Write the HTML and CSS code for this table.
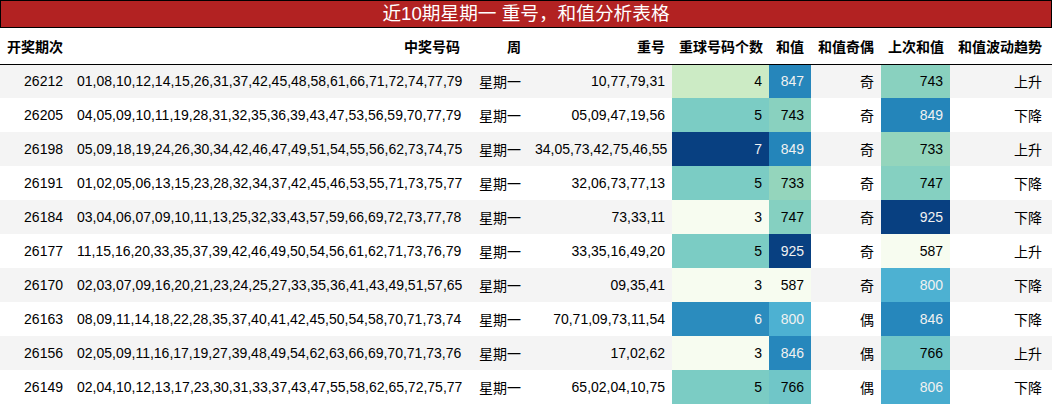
FILE: index.html
```html
<!DOCTYPE html>
<html lang="zh">
<head>
<meta charset="utf-8">
<title>近10期星期一 重号，和值分析表格</title>
<link rel="stylesheet" href="styles.css">
</head>
<body>
<div class="title">近10期星期一 重号，和值分析表格</div>
<table class="grid">
  <colgroup>
    <col class="c1"><col class="c2"><col class="c3"><col class="c4"><col class="c5"><col class="c6"><col class="c7"><col class="c8"><col class="c9">
  </colgroup>
  <thead>
    <tr><th>开奖期次</th><th>中奖号码</th><th>周</th><th>重号</th><th>重球号码个数</th><th>和值</th><th>和值奇偶</th><th>上次和值</th><th>和值波动趋势</th></tr>
  </thead>
  <tbody>
    <tr><td>26212</td><td>01,08,10,12,14,15,26,31,37,42,45,48,58,61,66,71,72,74,77,79</td><td>星期一</td><td>10,77,79,31</td><td class="g4">4</td><td class="s847 lt">847</td><td>奇</td><td class="s743">743</td><td>上升</td></tr>
    <tr><td>26205</td><td>04,05,09,10,11,19,28,31,32,35,36,39,43,47,53,56,59,70,77,79</td><td>星期一</td><td>05,09,47,19,56</td><td class="g5">5</td><td class="s743">743</td><td>奇</td><td class="s849 lt">849</td><td>下降</td></tr>
    <tr><td>26198</td><td>05,09,18,19,24,26,30,34,42,46,47,49,51,54,55,56,62,73,74,75</td><td>星期一</td><td>34,05,73,42,75,46,55</td><td class="g7 lt">7</td><td class="s849 lt">849</td><td>奇</td><td class="s733">733</td><td>上升</td></tr>
    <tr><td>26191</td><td>01,02,05,06,13,15,23,28,32,34,37,42,45,46,53,55,71,73,75,77</td><td>星期一</td><td>32,06,73,77,13</td><td class="g5">5</td><td class="s733">733</td><td>奇</td><td class="s747">747</td><td>下降</td></tr>
    <tr><td>26184</td><td>03,04,06,07,09,10,11,13,25,32,33,43,57,59,66,69,72,73,77,78</td><td>星期一</td><td>73,33,11</td><td class="g3">3</td><td class="s747">747</td><td>奇</td><td class="s925 lt">925</td><td>下降</td></tr>
    <tr><td>26177</td><td>11,15,16,20,33,35,37,39,42,46,49,50,54,56,61,62,71,73,76,79</td><td>星期一</td><td>33,35,16,49,20</td><td class="g5">5</td><td class="s925 lt">925</td><td>奇</td><td class="s587">587</td><td>上升</td></tr>
    <tr><td>26170</td><td>02,03,07,09,16,20,21,23,24,25,27,33,35,36,41,43,49,51,57,65</td><td>星期一</td><td>09,35,41</td><td class="g3">3</td><td class="s587">587</td><td>奇</td><td class="s800 lt">800</td><td>下降</td></tr>
    <tr><td>26163</td><td>08,09,11,14,18,22,28,35,37,40,41,42,45,50,54,58,70,71,73,74</td><td>星期一</td><td>70,71,09,73,11,54</td><td class="g6 lt">6</td><td class="s800 lt">800</td><td>偶</td><td class="s846 lt">846</td><td>下降</td></tr>
    <tr><td>26156</td><td>02,05,09,11,16,17,19,27,39,48,49,54,62,63,66,69,70,71,73,76</td><td>星期一</td><td>17,02,62</td><td class="g3">3</td><td class="s846 lt">846</td><td>偶</td><td class="s766">766</td><td>上升</td></tr>
    <tr><td>26149</td><td>02,04,10,12,13,17,23,30,31,33,37,43,47,55,58,62,65,72,75,77</td><td>星期一</td><td>65,02,04,10,75</td><td class="g5">5</td><td class="s766">766</td><td>偶</td><td class="s806 lt">806</td><td>下降</td></tr>
  </tbody>
</table>
</body>
</html>
```

FILE: styles.css
```css
html, body {
  margin: 0;
  padding: 0;
  background: #ffffff;
}

body {
  font-family: "Liberation Sans", "Noto Sans CJK SC", sans-serif;
  font-size: 14px;
  color: #000000;
}

.title {
  box-sizing: border-box;
  height: 28px;
  border: 1px solid #000000;
  background: #b22222;
  color: #ffffff;
  font-size: 18.67px;
  line-height: 26px;
  text-align: center;
}

.grid {
  width: 1052px;
  table-layout: fixed;
  border-collapse: collapse;
  border-spacing: 0;
}

.c1 { width: 70px; }
.c2 { width: 397px; }
.c3 { width: 61px; }
.c4 { width: 144px; }
.c5 { width: 97px; }
.c6 { width: 42px; }
.c7 { width: 70px; }
.c8 { width: 69px; }
.c9 { width: 102px; }

.grid th {
  height: 36px;
  padding: 0 7px;
  font-weight: bold;
  text-align: right;
  white-space: nowrap;
  border-bottom: 1px solid #000000;
  box-sizing: border-box;
}

.grid td {
  height: 34px;
  padding: 0 7px;
  text-align: right;
  white-space: nowrap;
  box-sizing: border-box;
}

.grid th:last-child,
.grid td:last-child {
  padding-right: 10px;
}

.grid tbody tr:nth-child(odd) { background: #f4f4f4; }
.grid tbody tr:nth-child(even) { background: #ffffff; }

.lt { color: #f1f1f1; }

.g3 { background: #f7fcf0; }
.g4 { background: #ccebc5; }
.g5 { background: #7bccc4; }
.g6 { background: #2b8cbe; }
.g7 { background: #084081; }

.s587 { background: #f7fcf0; }
.s733 { background: #94d5bc; }
.s743 { background: #89d1bf; }
.s747 { background: #85d0c1; }
.s766 { background: #70c6c8; }
.s800 { background: #4db1d2; }
.s806 { background: #48accf; }
.s846 { background: #2687bc; }
.s847 { background: #2686bb; }
.s849 { background: #2485ba; }
.s925 { background: #084081; }
```
